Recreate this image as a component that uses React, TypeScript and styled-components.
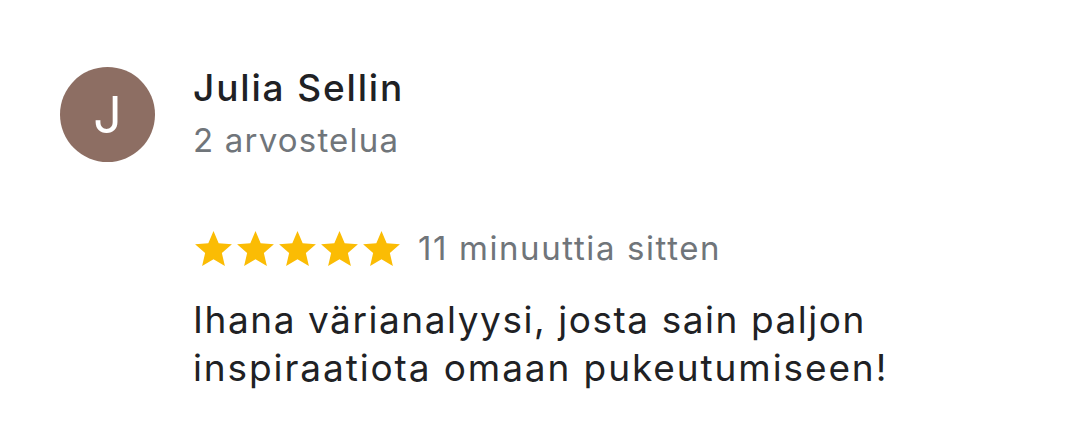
import React from "react";
import styled, { createGlobalStyle } from "styled-components";

const Global = createGlobalStyle`
  html, body { margin: 0; padding: 0; background: #ffffff; }
  body { font-family: Inter, Roboto, "Liberation Sans", Arial, sans-serif; -webkit-font-smoothing: antialiased; }
`;

const Card = styled.div`
  display: flex;
  flex-direction: column;
  padding: 66px 0 0 60px;
  width: 1089px;
  height: 434px;
  box-sizing: border-box;
`;

const Header = styled.div`
  display: flex;
  align-items: flex-start;
  gap: 38px;
`;

const Avatar = styled.div`
  width: 95px;
  height: 95px;
  margin-top: 1px;
  border-radius: 50%;
  background: #8d6e63;
  color: #ffffff;
  display: flex;
  align-items: center;
  justify-content: center;
  font-size: 50px;
  line-height: 1;
  font-weight: 400;
  flex-shrink: 0;
`;

const Who = styled.div`
  display: flex;
  flex-direction: column;
`;

const Name = styled.div`
  font-size: 37px;
  line-height: 44px;
  font-weight: 500;
  letter-spacing: 1.85px;
  color: #202124;
`;

const Meta = styled.div`
  font-size: 33px;
  line-height: 40px;
  letter-spacing: 1.2px;
  color: #70757a;
  margin-top: 10px;
`;

const Body = styled.div`
  display: flex;
  flex-direction: column;
  margin-left: 135px;
  margin-top: 66px;
`;

const RatingRow = styled.div`
  display: flex;
  align-items: center;
  gap: 18px;
`;

const Stars = styled.div`
  display: flex;
  gap: 5px;
`;

const Time = styled.span`
  font-size: 33px;
  line-height: 40px;
  letter-spacing: 1.6px;
  color: #70757a;
`;

const Text = styled.p`
  margin: 28px 0 0 -2px;
  font-size: 37px;
  line-height: 48px;
  letter-spacing: 1.55px;
  color: #202124;
`;

const Line = styled.span<{ $spread?: number }>`
  display: block;
  letter-spacing: ${(p) => (p.$spread ?? 1.55)}px;
`;

const Star = () => (
  <svg width="37" height="35" viewBox="2 2 20 19">
    <path
      fill="#fbbc04"
      d="M12 17.27L18.18 21l-1.64-7.03L22 9.24l-7.19-.61L12 2 9.19 8.63 2 9.24l5.46 4.73L5.82 21z"
    />
  </svg>
);

export default function App() {
  return (
    <>
      <Global />
      <Card>
        <Header>
          <Avatar>J</Avatar>
          <Who>
            <Name>Julia Sellin</Name>
            <Meta>2 arvostelua</Meta>
          </Who>
        </Header>
        <Body>
          <RatingRow>
            <Stars>
              {[0, 1, 2, 3, 4].map((i) => (
                <Star key={i} />
              ))}
            </Stars>
            <Time>11 minuuttia sitten</Time>
          </RatingRow>
          <Text>
            <Line>Ihana värianalyysi, josta sain paljon</Line>
            <Line $spread={1.9}>inspiraatiota omaan pukeutumiseen!</Line>
          </Text>
        </Body>
      </Card>
    </>
  );
}
